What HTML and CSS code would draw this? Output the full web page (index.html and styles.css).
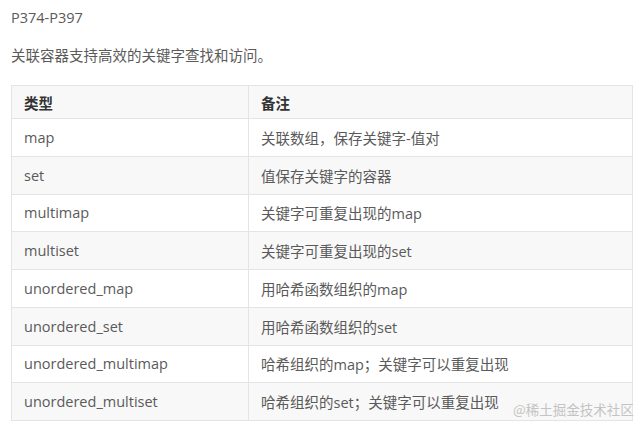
FILE: index.html
```html
<!DOCTYPE html>
<html lang="zh">
<head>
<meta charset="utf-8">
<link rel="stylesheet" href="styles.css">
</head>
<body>
<div class="page">
  <p class="line">P374-P397</p>
  <p class="line intro">关联容器支持高效的关键字查找和访问。</p>
  <table class="tbl">
    <thead>
      <tr><th class="c1">类型</th><th>备注</th></tr>
    </thead>
    <tbody>
      <tr><td>map</td><td>关联数组，保存关键字-值对</td></tr>
      <tr><td>set</td><td>值保存关键字的容器</td></tr>
      <tr><td>multimap</td><td>关键字可重复出现的map</td></tr>
      <tr><td>multiset</td><td>关键字可重复出现的set</td></tr>
      <tr><td>unordered_map</td><td>用哈希函数组织的map</td></tr>
      <tr><td>unordered_set</td><td>用哈希函数组织的set</td></tr>
      <tr><td>unordered_multimap</td><td>哈希组织的map；关键字可以重复出现</td></tr>
      <tr><td>unordered_multiset</td><td>哈希组织的set；关键字可以重复出现</td></tr>
    </tbody>
  </table>
  <div class="watermark">@稀土掘金技术社区</div>
</div>
</body>
</html>
```
FILE: styles.css
```css
html, body {
  margin: 0;
  padding: 0;
  background: #ffffff;
}
.page {
  position: relative;
  width: 641px;
  height: 429px;
  box-sizing: border-box;
  padding: 7px 8px 0 11px;
  font-family: "Open Sans", "Noto Sans CJK SC", sans-serif;
  font-size: 14.5px;
  color: #5a5a5a;
}
.line {
  margin: 0;
  line-height: 22px;
}
.intro {
  margin-top: 16px;
}
.tbl {
  margin-top: 18px;
  width: 622px;
  border-collapse: collapse;
  table-layout: fixed;
}
.tbl th, .tbl td {
  border: 1px solid #e4e4e4;
  text-align: left;
  padding: 0 0 0 12px;
  vertical-align: middle;
}
.tbl th {
  height: 32px;
  font-weight: 700;
  color: #333333;
  background: #f8f8f8;
}
.tbl .c1 {
  width: 224px;
}
.tbl td {
  height: 36.75px;
}
.tbl tbody tr:nth-child(even) td {
  background: #f8f8f8;
}
.watermark {
  position: absolute;
  left: 513px;
  top: 399px;
  font-family: "Noto Sans CJK SC", sans-serif;
  font-size: 13.5px;
  line-height: 20px;
  color: #c4c4c4;
}
```
